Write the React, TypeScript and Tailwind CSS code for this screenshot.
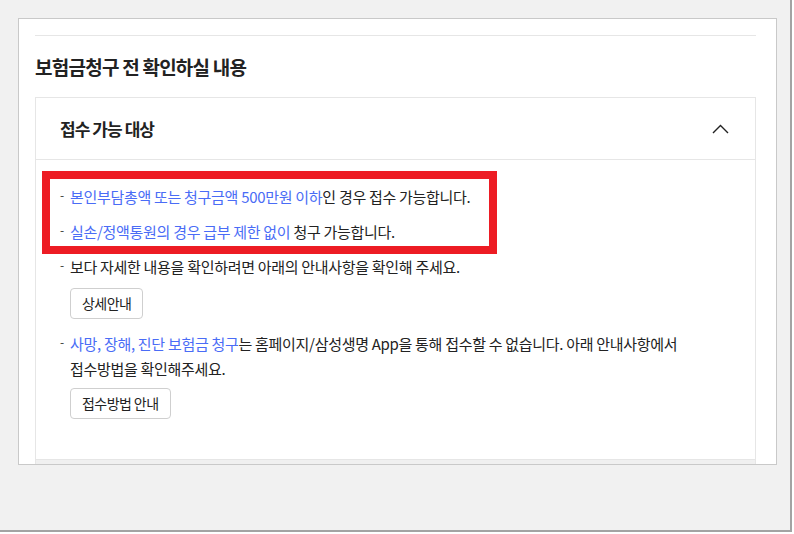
import { ReactNode } from 'react';

const Item = ({ children, className = '' }: { children: ReactNode; className?: string }) => (
  <li className={`flex ${className}`}>
    <span className="w-[10px] shrink-0 text-[12px] leading-[22px] text-[#333]">-</span>
    <div className="flex-1">{children}</div>
  </li>
);

const Blue = ({ children }: { children: ReactNode }) => <span className="text-[#4a6cf6]">{children}</span>;

const GuideButton = ({ label, className = '' }: { label: string; className?: string }) => (
  <button
    className={`h-[31px] px-[11px] rounded-[4px] border border-[#cfcfcf] bg-white text-[14px] tracking-[-0.04em] text-[#222] ${className}`}
  >
    {label}
  </button>
);

export default function App() {
  return (
    <div className="w-[794px] h-[534px] bg-white font-['Noto_Sans_CJK_KR','Noto_Sans',sans-serif]">
      <div className="w-[792px] h-[532px] bg-[#f1f1f1] border-r-2 border-b-2 border-[#a3a3a3] pt-[18px] pl-[18px]">
        {/* Panel */}
        <div className="w-[759px] h-[447px] bg-white border border-[#c9c9c9] overflow-hidden pl-4 pr-5 pt-4">
          <div className="h-px bg-[#e6e6e6]" />
          <h2 className="mt-[18px] mb-[17px] text-[19px] leading-[26px] font-bold tracking-[-0.04em] text-[#222]">
            보험금청구 전 확인하실 내용
          </h2>

          {/* Accordion */}
          <div className="border border-[#e6e6e6]">
            <div className="h-[62px] border-b border-[#e6e6e6] flex items-center justify-between pl-6 pr-[26px]">
              <span className="text-[17px] font-bold tracking-[-0.055em] text-[#222]">접수 가능 대상</span>
              <svg width="17" height="10" viewBox="0 0 17 10" fill="none">
                <polyline points="1,9 8.5,1.5 16,9" stroke="#222" strokeWidth="1.4" />
              </svg>
            </div>

            <div className="relative pt-6 pb-10 pl-6 pr-6">
              <ul className="text-[15px] leading-[25px] tracking-[-0.02em] text-[#222]">
                <Item>
                  <Blue>본인부담총액 또는 청구금액 500만원 이하</Blue>인 경우 접수 가능합니다.
                </Item>
                <Item className="mt-[10px]">
                  <Blue>실손/정액통원의 경우 급부 제한 없이</Blue> 청구 가능합니다.
                </Item>
                <Item className="mt-[10px]">
                  <p>보다 자세한 내용을 확인하려면 아래의 안내사항을 확인해 주세요.</p>
                  <GuideButton label="상세안내" className="mt-[9px]" />
                </Item>
                <Item className="mt-3">
                  <p>
                    <Blue>사망, 장해, 진단 보험금 청구</Blue>는 홈페이지/삼성생명 App을 통해 접수할 수 없습니다. 아래 안내사항에서
                    <br />
                    접수방법을 확인해주세요.
                  </p>
                  <GuideButton label="접수방법 안내" className="mt-[7px]" />
                </Item>
              </ul>

              {/* highlight annotation */}
              <div className="absolute left-[6px] top-[11px] w-[455px] h-[83px] border-[8px] border-[#ed1c24]" />
            </div>

            <div className="h-5 bg-[#f0f0f0] border-t border-[#e6e6e6]" />
          </div>
        </div>
      </div>
    </div>
  );
}
